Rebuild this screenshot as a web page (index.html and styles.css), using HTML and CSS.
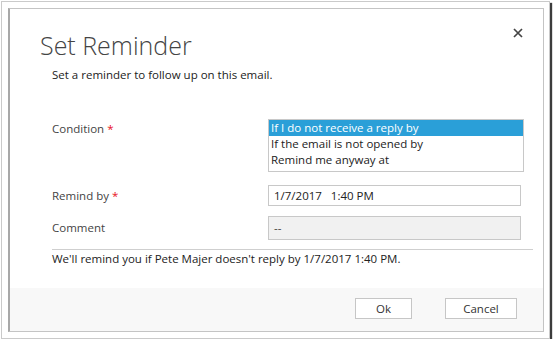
FILE: index.html
```html
<!DOCTYPE html>
<html lang="en">
<head>
    <meta charset="UTF-8">
    <title>Set Reminder</title>
    <link rel="stylesheet" href="styles.css">
</head>
<body>

<div class="shot">
    <div class="dialog">
        <div class="dialog-body">
            <div class="header">
                <h1>Set Reminder</h1>
                <button class="btn-close" title="Close">
                    <svg width="10" height="10" viewBox="0 0 10 10">
                        <path d="M1 1 L9 9 M9 1 L1 9" stroke="#444" stroke-width="1.7" fill="none"/>
                    </svg>
                </button>
            </div>
            <p class="intro">Set a reminder to follow up on this email.</p>

            <div class="form">
                <div class="row row-condition">
                    <label>Condition<span class="req">*</span></label>
                    <ul class="listbox">
                        <li class="selected">If I do not receive a reply by</li>
                        <li>If the email is not opened by</li>
                        <li>Remind me anyway at</li>
                    </ul>
                </div>
                <div class="row row-remind">
                    <label>Remind by<span class="req">*</span></label>
                    <div class="field">1/7/2017&nbsp;&nbsp; 1:40 PM</div>
                </div>
                <div class="row row-comment">
                    <label>Comment</label>
                    <div class="field field-disabled">--</div>
                </div>
            </div>

            <p class="summary">We'll remind you if Pete Majer doesn't reply by 1/7/2017 1:40 PM.</p>
        </div>

        <div class="footer">
            <button class="btn btn-ok">Ok</button>
            <button class="btn btn-cancel">Cancel</button>
        </div>
    </div>
</div>

</body>
</html>
```

FILE: styles.css
```css
body {
    margin: 0;
    background-color: #fff;
    font-family: 'Open Sans', 'Noto Sans', Arial, sans-serif;
    font-size: 11.5px;
    color: #222;
}

/* screenshot frame */
.shot {
    margin: 1px 0 0 1px;
    width: 549px;
    height: 338px;
    box-sizing: border-box;
    border: 1px solid #cacaca;
    padding: 6px 5px 6px 6px;
    background-color: #fff;
    box-shadow: 2px 2px 1px #3c3c3c;
}

.dialog {
    width: 536px;
    height: 324px;
    box-sizing: border-box;
    border: 1px solid #c4c4c4;
    border-left: 2px solid #a8a8a8;
    display: flex;
    flex-direction: column;
}

.dialog-body {
    flex: 1;
    padding: 20px 0 0 30px;
}

.header {
    display: flex;
    justify-content: space-between;
    align-items: flex-start;
}

h1 {
    margin: 0;
    font-size: 25px;
    font-weight: 300;
    line-height: 32px;
    color: #444;
}

.btn-close {
    border: none;
    background: none;
    padding: 0;
    margin: 0 20px 0 0;
    width: 10px;
    height: 10px;
    position: relative;
    top: -1px;
    cursor: pointer;
}

.btn-close svg {
    display: block;
}

.intro {
    margin: 6px 0 0 12px;
    line-height: 16px;
}

.form {
    margin: 36px 0 0 12px;
}

.row {
    display: grid;
    grid-template-columns: 216px 256px;
    align-items: center;
}

.row label {
    color: #444;
    line-height: 16px;
}

.req {
    color: #e81123;
    margin-left: 3px;
}

.row-condition {
    align-items: start;
}

.row-condition label {
    padding-top: 2px;
}

.listbox {
    list-style: none;
    margin: 0;
    padding: 0;
    height: 51px;
    border: 1px solid #c8c8c8;
}

.listbox li {
    height: 16px;
    line-height: 16px;
    padding-left: 2px;
}

.listbox li.selected {
    background-color: #2a9fd8;
    color: #fff;
}

.row-remind {
    margin-top: 13px;
}

.row-comment {
    margin-top: 10px;
}

.field {
    width: 253px;
    height: 21px;
    box-sizing: border-box;
    border: 1px solid #c8c8c8;
    padding-left: 5px;
    line-height: 19px;
}

.field-disabled {
    height: 24px;
    line-height: 22px;
    background-color: #f1f1f1;
    color: #444;
}

.summary {
    margin: 9px 0 0 12px;
    width: 481px;
    border-top: 1px solid #cfcfcf;
    padding-top: 1px;
    line-height: 16px;
}

.footer {
    height: 43px;
    box-sizing: border-box;
    background-color: #f8f8f8;
    display: flex;
    justify-content: flex-end;
    align-items: flex-start;
    gap: 33px;
    padding: 10px 26px 0 0;
}

.btn {
    height: 21px;
    box-sizing: border-box;
    border: 1px solid #c6c6c6;
    background-color: #fff;
    font-family: inherit;
    font-size: 11.5px;
    color: #333;
    padding: 0;
    cursor: pointer;
}

.btn-ok {
    width: 57px;
}

.btn-cancel {
    width: 72px;
}
```
